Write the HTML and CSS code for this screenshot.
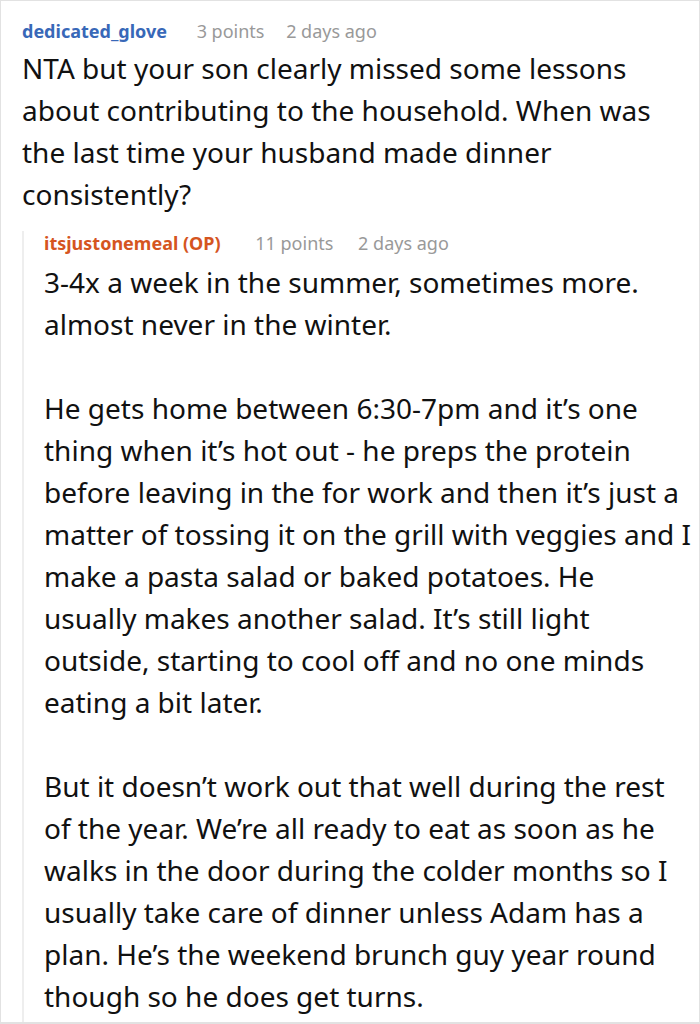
FILE: index.html
```html
<!DOCTYPE html>
<html lang="en">
<head>
<meta charset="utf-8">
<link rel="stylesheet" href="styles.css">
</head>
<body>
<div class="page">
  <div class="comment">
    <div class="meta">
      <span class="user user-blue">dedicated_glove</span>
      <span class="points">3 points</span>
      <span class="time">2 days ago</span>
    </div>
    <div class="text">
      <p>NTA but your son clearly missed some lessons about contributing to the household. When was the last time your husband made dinner consistently?</p>
    </div>
    <div class="reply">
      <div class="meta">
        <span class="user user-orange">itsjustonemeal (OP)</span>
        <span class="points">11 points</span>
        <span class="time">2 days ago</span>
      </div>
      <div class="text">
        <p>3-4x a week in the summer, sometimes more. almost never in the winter.</p>
        <p>He gets home between 6:30-7pm and it’s one thing when it’s hot out - he preps the protein before leaving in the for work and then it’s just a matter of tossing it on the grill with veggies and I make a pasta salad or baked potatoes. He usually makes another salad. It’s still light outside, starting to cool off and no one minds eating a bit later.</p>
        <p>But it doesn’t work out that well during the rest of the year. We’re all ready to eat as soon as he walks in the door during the colder months so I usually take care of dinner unless Adam has a plan. He’s the weekend brunch guy year round though so he does get turns.</p>
      </div>
    </div>
  </div>
</div>
</body>
</html>
```

FILE: styles.css
```css
html, body {
  margin: 0;
  padding: 0;
  background: #ffffff;
}
.page {
  width: 700px;
  height: 1024px;
  box-sizing: border-box;
  border: 1px solid #e2e2e2;
  border-bottom-width: 2px;
  overflow: hidden;
  font-family: "Noto Sans", "Open Sans", sans-serif;
  color: #111111;
}
.comment {
  padding: 18px 6px 0 21px;
}
.meta {
  font-size: 18px;
  line-height: 24px;
  white-space: nowrap;
}
.user {
  font-weight: bold;
  margin-right: 25px;
}
.user-blue { color: #3868b8; }
.user-orange { color: #d5551f; }
.points {
  color: #999999;
  margin-right: 17px;
}
.time {
  color: #999999;
}
.text {
  margin-top: 4px;
}
.text p {
  margin: 0 0 42px 0;
  font-size: 28px;
  line-height: 42px;
}
.text p:last-child {
  margin-bottom: 0;
}
.reply {
  margin-top: 16px;
  border-left: 2px solid #eeeeee;
  padding-left: 20px;
  padding-bottom: 20px;
}
.reply .user {
  margin-right: 30px;
}
.reply .points {
  margin-right: 20px;
}
.reply .text {
  margin-top: 6px;
}
```
